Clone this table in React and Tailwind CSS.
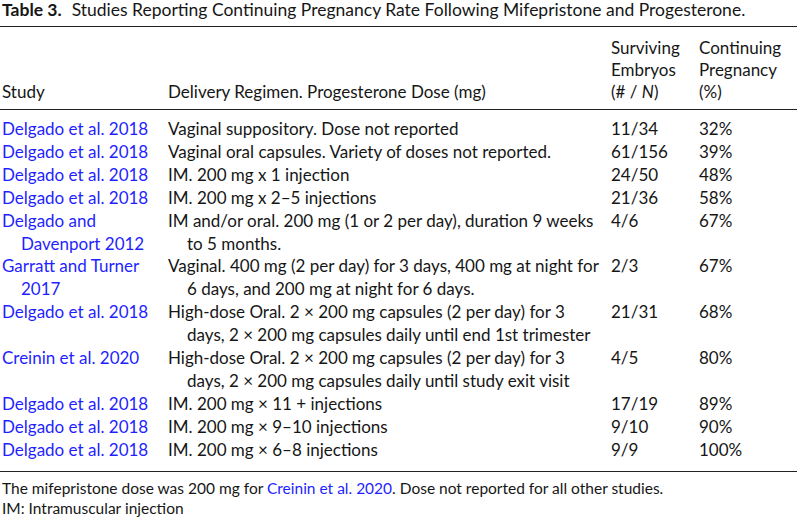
import React from "react"

const rows = [
  { study: ["Delgado et al. 2018"], regimen: ["Vaginal suppository. Dose not reported"], embryos: "11/34", rate: "32%" },
  { study: ["Delgado et al. 2018"], regimen: ["Vaginal oral capsules. Variety of doses not reported."], embryos: "61/156", rate: "39%" },
  { study: ["Delgado et al. 2018"], regimen: ["IM. 200 mg x 1 injection"], embryos: "24/50", rate: "48%" },
  { study: ["Delgado et al. 2018"], regimen: ["IM. 200 mg x 2–5 injections"], embryos: "21/36", rate: "58%" },
  {
    study: ["Delgado and", "Davenport 2012"],
    regimen: ["IM and/or oral. 200 mg (1 or 2 per day), duration 9 weeks", "to 5 months."],
    embryos: "4/6",
    rate: "67%",
  },
  {
    study: ["Garratt and Turner", "2017"],
    regimen: ["Vaginal. 400 mg (2 per day) for 3 days, 400 mg at night for", "6 days, and 200 mg at night for 6 days."],
    embryos: "2/3",
    rate: "67%",
  },
  {
    study: ["Delgado et al. 2018"],
    regimen: ["High-dose Oral. 2 × 200 mg capsules (2 per day) for 3", "days, 2 × 200 mg capsules daily until end 1st trimester"],
    embryos: "21/31",
    rate: "68%",
  },
  {
    study: ["Creinin et al. 2020"],
    regimen: ["High-dose Oral. 2 × 200 mg capsules (2 per day) for 3", "days, 2 × 200 mg capsules daily until study exit visit"],
    embryos: "4/5",
    rate: "80%",
  },
  { study: ["Delgado et al. 2018"], regimen: ["IM. 200 mg × 11 + injections"], embryos: "17/19", rate: "89%" },
  { study: ["Delgado et al. 2018"], regimen: ["IM. 200 mg × 9–10 injections"], embryos: "9/10", rate: "90%" },
  { study: ["Delgado et al. 2018"], regimen: ["IM. 200 mg × 6–8 injections"], embryos: "9/9", rate: "100%" },
]

// first line flush left, wrapped lines hang in by 19px
function Lines({ lines }) {
  return lines.map((l, i) => (
    <div key={i} className={i > 0 ? "pl-[19px] whitespace-nowrap" : "whitespace-nowrap"}>
      {l}
    </div>
  ))
}

export default function App() {
  return (
    <div className="w-[797px] h-[517px] overflow-hidden bg-white text-[#161616] font-['Lato','Liberation_Sans',sans-serif] text-[17px]">
      <div className="pl-[2px] h-[19px] leading-[19px] whitespace-nowrap text-[17.5px]">
        <span className="font-bold">Table 3.</span>
        <span className="ml-[10px]">Studies Reporting Continuing Pregnancy Rate Following Mifepristone and Progesterone.</span>
      </div>

      <table className="mt-[7px] w-full table-fixed border-collapse">
        <colgroup>
          <col className="w-[168px]" />
          <col className="w-[443px]" />
          <col className="w-[88px]" />
          <col />
        </colgroup>
        <thead>
          <tr className="border-t border-b border-[#222] align-bottom text-left leading-[22px]">
            <th className="font-normal pl-[2px] pt-[10px] pb-[6px]">Study</th>
            <th className="font-normal pt-[10px] pb-[6px]">Delivery Regimen. Progesterone Dose (mg)</th>
            <th className="font-normal pt-[10px] pb-[6px]">
              Surviving
              <br />
              Embryos
              <br />
              (# / <i>N</i>)
            </th>
            <th className="font-normal pt-[10px] pb-[6px]">
              Continuing
              <br />
              Pregnancy
              <br />
              (%)
            </th>
          </tr>
        </thead>
        <tbody className="leading-[22.9px] border-b border-[#222]">
          {rows.map((r, i) => {
            const pad = `${i === 0 ? "pt-[8px]" : ""} ${i === rows.length - 1 ? "pb-[9px]" : ""}`
            return (
              <tr key={i} className="align-top">
                <td className={`pl-[2px] text-[#1f1fff] ${pad}`}>
                  <Lines lines={r.study} />
                </td>
                <td className={pad}>
                  <Lines lines={r.regimen} />
                </td>
                <td className={pad}>{r.embryos}</td>
                <td className={pad}>{r.rate}</td>
              </tr>
            )
          })}
        </tbody>
      </table>

      <div className="pl-[2px] pt-[6px] text-[15.5px] leading-[20px] whitespace-nowrap">
        <div>
          The mifepristone dose was 200 mg for <span className="text-[#1f1fff]">Creinin et al. 2020</span>. Dose not reported for all other studies.
        </div>
        <div>IM: Intramuscular injection</div>
      </div>
    </div>
  )
}
